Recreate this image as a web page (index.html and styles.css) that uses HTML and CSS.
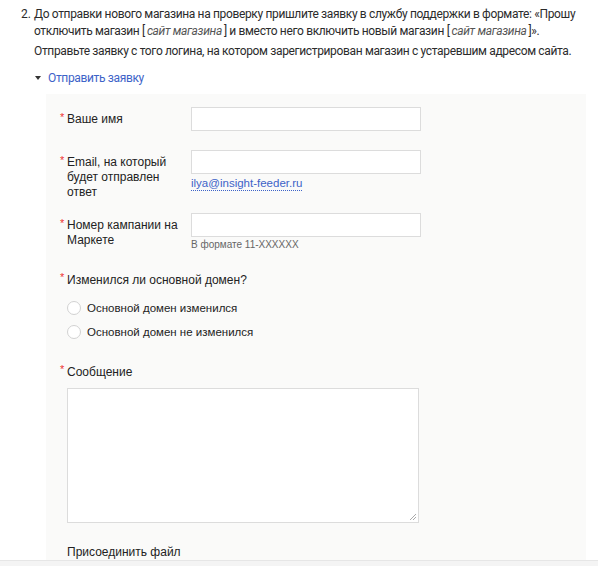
FILE: index.html
```html
<!DOCTYPE html>
<html lang="ru">
<head>
<meta charset="utf-8">
<link rel="stylesheet" href="styles.css">
</head>
<body>
<div class="item">
  <div class="num">2.</div>
  <div class="content">
    <p class="p1">До отправки нового магазина на проверку пришлите заявку в службу поддержки в формате: «Прошу отключить магазин [<i>сайт магазина</i>] и вместо него включить новый магазин [<i>сайт магазина</i>]».</p>
    <p class="p2">Отправьте заявку с того логина, на котором зарегистрирован магазин с устаревшим адресом сайта.</p>
    <div class="toggle"><span class="tri"></span><a class="link">Отправить заявку</a></div>
    <div class="panel">
      <div class="row r1">
        <div class="label"><span class="req">*</span>Ваше имя</div>
        <div class="field"><div class="input"></div></div>
      </div>
      <div class="row r2">
        <div class="label"><span class="req">*</span>Email, на который будет отправлен ответ</div>
        <div class="field"><div class="input"></div><a class="email">ilya@insight-feeder.ru</a></div>
      </div>
      <div class="row r3">
        <div class="label"><span class="req">*</span>Номер кампании на Маркете</div>
        <div class="field"><div class="input"></div><div class="hint">В формате 11-XXXXXX</div></div>
      </div>
      <div class="q"><span class="req">*</span>Изменился ли основной домен?</div>
      <div class="radios">
        <div class="radio"><span class="circle"></span>Основной домен изменился</div>
        <div class="radio"><span class="circle"></span>Основной домен не изменился</div>
      </div>
      <div class="q msg"><span class="req">*</span>Сообщение</div>
      <div class="textarea"><svg class="grip" width="9" height="9" viewBox="0 0 9 9"><path d="M8 2L2 8M8 5L5 8" stroke="#aaa" stroke-width="1"/></svg></div>
      <div class="attach">Присоединить файл</div>
    </div>
  </div>
</div>
<div class="footer"></div>
</body>
</html>
```
FILE: styles.css
```css
html, body { margin: 0; padding: 0; background: #fff; }
body { font-family: Roboto, "Noto Sans", sans-serif; color: #2b2b2b; overflow: hidden; height: 566px; }
.item { display: flex; padding-top: 6px; }
.num { width: 34px; box-sizing: border-box; padding-right: 3px; text-align: right; font-size: 12px; line-height: 17px; }
.content { flex: 1; padding-right: 8px; }
.p1 { margin: 0; font-size: 12px; line-height: 17px; letter-spacing: -0.35px; }
.p1 i { color: #555; margin: 0 2px; }
.p2 { margin: 3px 0 0; font-size: 12px; line-height: 17px; letter-spacing: -0.35px; }
.toggle { display: flex; align-items: center; margin-top: 8px; height: 20px; }
.tri { width: 0; height: 0; border-left: 3px solid transparent; border-right: 3px solid transparent; border-top: 4px solid #333; margin-left: 1px; margin-right: 7px; }
.link { color: #3d63c8; font-size: 12px; letter-spacing: -0.35px; }
.panel { margin-top: 6px; margin-left: 12px; margin-right: 4px; background: #fafaf9; padding: 13px 0 0 14px; height: 466px; box-sizing: border-box; font-family: "Liberation Sans", Arial, sans-serif; font-size: 12px; color: #222; }
.row { display: flex; }
.label { width: 131px; box-sizing: border-box; padding-left: 7px; position: relative; line-height: 15px; padding-right: 8px; font-size: 12px; }
.req { color: #e33; position: absolute; left: 0; top: 5px; font-size: 11px; line-height: 11px; }
.label, .q { padding-top: 5px; }
.field { width: 230px; }
.input { height: 24px; box-sizing: border-box; border: 1px solid #dcdcdc; background: #fff; }
.r2 { margin-top: 19px; }
.r3 { margin-top: 13px; }
.email { display: inline-block; margin-top: 2px; color: #3d63c8; border-bottom: 1px dotted #3d63c8; line-height: 14px; font-size: 11.5px; }
.hint { margin-top: 1px; font-size: 10px; line-height: 13px; color: #666; }
.q { position: relative; padding-left: 7px; margin-top: 16px; line-height: 16px; font-size: 12px; }
.radios { margin-top: 8px; padding-left: 7px; }
.radio { display: flex; align-items: center; height: 24px; font-size: 11.5px; }
.circle { width: 12px; height: 12px; border: 1px solid #d2d2d2; border-radius: 50%; background: #fff; margin-right: 6px; }
.msg { margin-top: 15px; }
.textarea { margin-top: 8px; margin-left: 7px; width: 352px; height: 135px; box-sizing: border-box; border: 1px solid #dcdcdc; background: #fff; position: relative; }
.grip { position: absolute; right: 1px; bottom: 1px; }
.attach { margin-top: 22px; padding-left: 7px; font-size: 12px; line-height: 15px; }
.footer { height: 20px; background: #f4f4f4; border-top: 1px solid #e6e6e6; }
```
